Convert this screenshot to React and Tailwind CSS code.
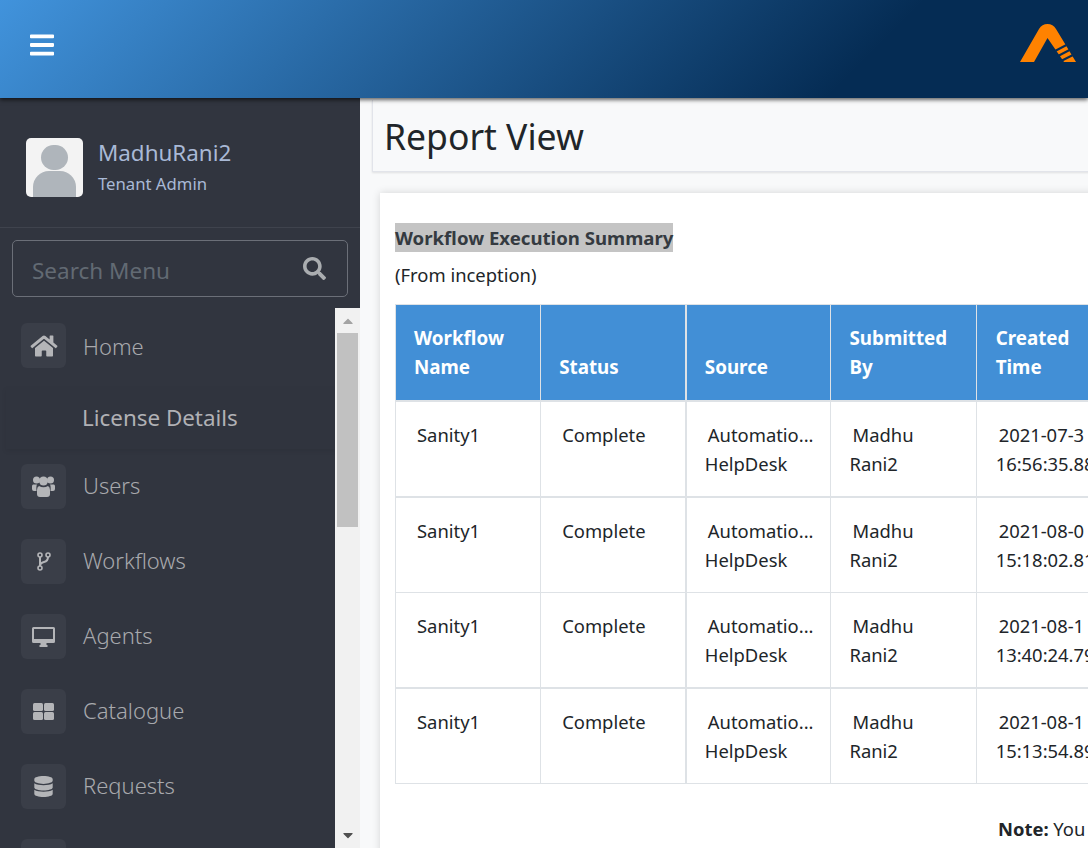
import React from 'react';
import {
  FaBars,
  FaSearch,
  FaHome,
  FaDatabase,
  FaCaretUp,
  FaCaretDown,
} from 'react-icons/fa';

const UsersIcon = () => (
  <svg width="23" height="21" viewBox="0 0 23 21" fill="currentColor">
    <circle cx="4.5" cy="4" r="3.5" />
    <circle cx="18.5" cy="4" r="3.5" />
    <circle cx="11.5" cy="5" r="4.5" />
    <path d="M1 8.5 H5 Q4 10 4.5 15 H2 Q0 15 0 13 V10 Q0 9 1 8.5 Z" />
    <path d="M22 8.5 H18 Q19 10 18.5 15 H21 Q23 15 23 13 V10 Q23 9 22 8.5 Z" />
    <path d="M7 10 Q11.5 12.5 16 10 Q18 11 18 14 V18 Q18 21 15 21 H8 Q5 21 5 18 V14 Q5 11 7 10 Z" />
  </svg>
);

const ForkIcon = () => (
  <svg width="14" height="19" viewBox="0 0 14 19" fill="none" stroke="currentColor" strokeWidth="1.6">
    <circle cx="3" cy="3" r="2" />
    <circle cx="3" cy="16" r="2" />
    <circle cx="11" cy="3" r="2" />
    <path d="M3 5 V14 M11 5 Q11 9 7 10 Q3 11 3 14" strokeWidth="2" />
  </svg>
);

const DesktopIcon = () => (
  <svg width="23" height="20" viewBox="0 0 23 20" fill="currentColor">
    <path
      fillRule="evenodd"
      d="M1.5 0 H21.5 Q23 0 23 1.5 V14.5 Q23 16 21.5 16 H1.5 Q0 16 0 14.5 V1.5 Q0 0 1.5 0 Z M2 2 V12 H21 V2 Z"
    />
    <path d="M8.5 16 H14.5 V18 H15.5 V20 H7.5 V18 H8.5 Z" />
  </svg>
);

const TilesIcon = () => (
  <svg width="21" height="17" viewBox="0 0 21 17" fill="currentColor">
    <rect x="0" y="0" width="10" height="8" rx="1.5" />
    <rect x="11" y="0" width="10" height="8" rx="1.5" />
    <rect x="0" y="9" width="10" height="8" rx="1.5" />
    <rect x="11" y="9" width="10" height="8" rx="1.5" />
  </svg>
);

const menu = [
  { label: 'Users', icon: <UsersIcon /> },
  { label: 'Workflows', icon: <ForkIcon /> },
  { label: 'Agents', icon: <DesktopIcon /> },
  { label: 'Catalogue', icon: <TilesIcon /> },
  { label: 'Requests', icon: <FaDatabase className="w-[19px] h-[21px]" /> },
];

const rows = [
  { date: '2021-07-3', time: '16:56:35.88', cls: 'h-[96px] border-b-2' },
  { date: '2021-08-0', time: '15:18:02.81', cls: 'h-[96px] border-b' },
  { date: '2021-08-1', time: '13:40:24.79', cls: 'h-[95px] border-b-2' },
  { date: '2021-08-1', time: '15:13:54.89', cls: 'h-[96px] border-b' },
];

const headers = [
  ['Workflow', 'Name'],
  ['Status'],
  ['Source'],
  ['Submitted', 'By'],
  ['Created', 'Time'],
];

const Logo = () => (
  <svg width="56" height="38" viewBox="0 0 56 38">
    <path
      d="M0 38 L19 5 Q22 0 27.5 0 Q33 0 36 5 L56 38 L44 38 L27.5 14 L14 38 Z"
      fill="#ff8200"
    />
    <path d="M35 27 L46.5 21 M38 32 L49.5 26 M41 37 L53 31" stroke="#062c54" strokeWidth="2" />
  </svg>
);

const Sidebar = () => (
  <aside className="w-[360px] h-[750px] shrink-0 bg-[#31353f] flex flex-col overflow-hidden">
    {/* Usuario */}
    <div className="h-[130px] shrink-0 border-b border-[#3f434d] pl-[26px] pt-[40px] flex items-start gap-[15px]">
      <div className="w-[57px] h-[59px] rounded-[5px] bg-[#f3f3f3] overflow-hidden flex flex-col items-center">
        <div className="w-[27px] h-[27px] mt-[7px] rounded-full bg-[#afb5bb]" />
        <div className="w-[43px] h-[28px] mt-[1px] rounded-t-[16px] bg-[#afb5bb]" />
      </div>
      <div>
        <div className="text-[22.4px] leading-[30px] text-[#a9b9d6]">MadhuRani2</div>
        <div className="text-[16.7px] leading-[24px] mt-[4px] text-[#a9b9d6]">Tenant Admin</div>
      </div>
    </div>

    {/* Buscador */}
    <div className="mx-[12px] mt-[12px] h-[57px] shrink-0 rounded-[5px] border border-[#6b6f78] pl-[19px] pr-[21px] flex items-center justify-between">
      <span className="text-[22.5px] text-[#626a73] mt-[5px]">Search Menu</span>
      <FaSearch className="w-[23px] h-[23px] text-[#aaadb0]" />
    </div>

    {/* Menu */}
    <div className="mt-[11px] flex-1 min-h-0 flex">
      <nav className="w-[335px] overflow-hidden pt-[15px]">
        <div className="flex items-center gap-[17px] pl-[21px] h-[45px]">
          <div className="w-[45px] h-[45px] rounded-[6px] bg-[#3a3e48] flex items-center justify-center text-[#b4b5b8]">
            <FaHome className="w-[28px] h-[24px]" />
          </div>
          <span className="text-[22px] font-light text-[#a8a9ad] mt-[1px]">Home</span>
        </div>
        <div className="ml-[6px] mt-[20px] h-[61px] bg-[#30343e] shadow-[0_2px_5px_rgba(0,0,0,0.08)] pl-[76px] flex items-center">
          <span className="text-[22.4px] text-[#b0b1b5] -mt-[2px]">License Details</span>
        </div>
        <div className="mt-[15px] flex flex-col gap-[30px] pl-[21px]">
          {menu.map((item) => (
            <div key={item.label} className="flex items-center gap-[17px] h-[45px]">
              <div className="w-[45px] h-[45px] shrink-0 rounded-[6px] bg-[#3a3e48] flex items-center justify-center text-[#b4b5b8]">
                {item.icon}
              </div>
              <span className="text-[22px] font-light text-[#a8a9ad] -mt-[2px]">{item.label}</span>
            </div>
          ))}
          <div className="w-[45px] h-[45px] shrink-0 rounded-[6px] bg-[#3a3e48]" />
        </div>
      </nav>

      {/* Barra de scroll */}
      <div className="w-[25px] bg-[#f1f1f1] flex flex-col items-center">
        <FaCaretUp className="w-[16px] h-[16px] mt-[5px] text-[#a3a3a3]" />
        <div className="w-[21px] h-[194px] mt-[4px] bg-[#c1c1c1]" />
        <div className="flex-1" />
        <FaCaretDown className="w-[16px] h-[16px] mb-[5px] text-[#505050]" />
      </div>
    </div>
  </aside>
);

const ReportTable = () => (
  <table className="table-fixed border-collapse w-[872px] text-[18.4px] leading-[29px] text-[#212529] border border-[#dee2e6]">
    <thead>
      <tr className="bg-[#428fd6] text-white font-bold text-[18.8px] border-b-2 border-[#dee2e6]">
        {headers.map((lines, i) => (
          <th
            key={lines[0]}
            className={`w-[145px] h-[96px] pr-[18px] pb-[18px] align-bottom text-left border-x border-[#dee2e6] ${i === 2 ? 'border-l-2' : ''} ${i === 4 ? 'pl-[19px]' : 'pl-[18px]'}`}
          >
            {lines.map((line) => (
              <div key={line}>{line}</div>
            ))}
          </th>
        ))}
        <th className="w-[145px] border-x border-[#dee2e6]" />
      </tr>
    </thead>
    <tbody>
      {rows.map((row, i) => (
        <tr key={i} className={`${row.cls} border-[#dee2e6]`}>
          <td className="px-[18px] pt-[18px] align-top indent-[3px] border-x border-[#dee2e6]">Sanity1</td>
          <td className="px-[18px] pt-[18px] align-top indent-[3px] border-x border-[#dee2e6]">Complete</td>
          <td className="pl-[18px] pt-[18px] align-top border-x border-l-2 border-[#dee2e6]">
            <div className="indent-[3px] whitespace-nowrap">Automatio...</div>
            <div>HelpDesk</div>
          </td>
          <td className="pl-[18px] pt-[18px] align-top border-x border-[#dee2e6]">
            <div className="indent-[3px]">Madhu</div>
            <div>Rani2</div>
          </td>
          <td className="pl-[19px] pt-[18px] align-top border-x border-[#dee2e6]">
            <div className="indent-[3px] whitespace-nowrap">{row.date}</div>
            <div className="whitespace-nowrap">{row.time}</div>
          </td>
          <td className="border-x border-[#dee2e6]" />
        </tr>
      ))}
    </tbody>
  </table>
);

export default function App() {
  return (
    <div className="w-[1088px] h-[848px] overflow-hidden bg-[#f8f9fa] font-['Noto_Sans',sans-serif]">
      <header className="relative z-10 h-[98px] pl-[30px] pr-[12px] flex items-center justify-between bg-[linear-gradient(135deg,#4193dc_0%,#052c54_78%)] shadow-[0_2px_4px_rgba(0,0,0,0.6)]">
        <FaBars className="w-[24px] h-[28px] text-white -mt-[8px]" />
        <div className="-mt-[12px]">
          <Logo />
        </div>
      </header>

      <div className="flex">
        <Sidebar />
        <main className="flex-1 min-w-0 pl-[12px]">
          <div className="h-[72px] w-[800px] mt-[2px] pl-[11px] border-b border-l border-[#e2e4ea] shadow-[0_1px_2px_rgba(0,0,0,0.1)] flex items-center">
            <h1 className="text-[35.5px] text-[#212529] mt-[2px]">Report View</h1>
          </div>
          <section className="ml-[8px] mt-[21px] w-[900px] h-[700px] bg-white shadow-[0_0_8px_rgba(0,0,0,0.15)] pl-[15px] pt-[30px]">
            <div className="text-[18.6px] leading-[29px] font-bold text-[#343a40]">
              <span className="bg-[#c4c4c4] inline-block">Workflow Execution Summary</span>
            </div>
            <p className="mt-[8px] text-[18.4px] leading-[29px] text-[#212529]">(From inception)</p>
            <div className="mt-[15px]">
              <ReportTable />
            </div>
            <p className="mt-[30px] pl-[603px] text-[18.4px] leading-[29px] text-[#212529] whitespace-nowrap">
              <b>Note:</b> You
            </p>
          </section>
        </main>
      </div>
    </div>
  );
}
